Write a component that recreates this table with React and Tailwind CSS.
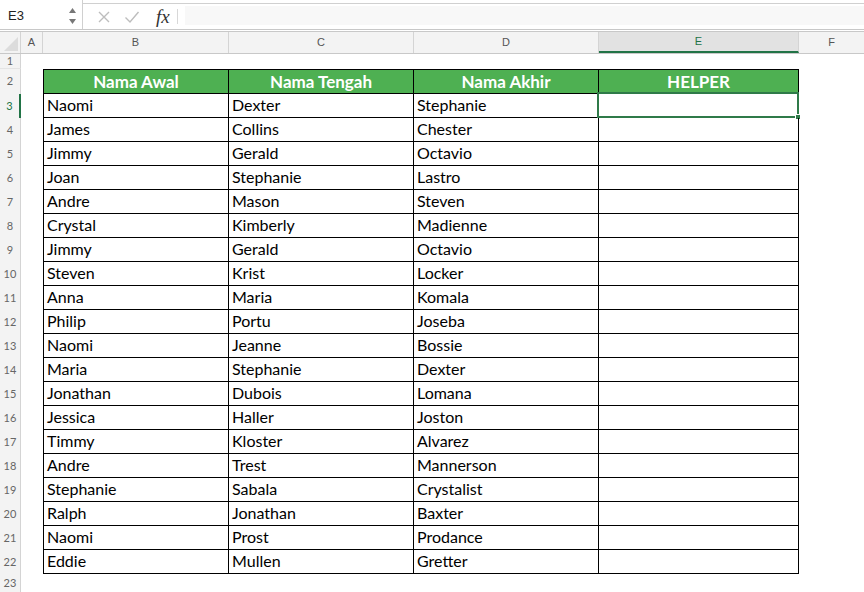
const data = [
  ["Naomi", "Dexter", "Stephanie"],
  ["James", "Collins", "Chester"],
  ["Jimmy", "Gerald", "Octavio"],
  ["Joan", "Stephanie", "Lastro"],
  ["Andre", "Mason", "Steven"],
  ["Crystal", "Kimberly", "Madienne"],
  ["Jimmy", "Gerald", "Octavio"],
  ["Steven", "Krist", "Locker"],
  ["Anna", "Maria", "Komala"],
  ["Philip", "Portu", "Joseba"],
  ["Naomi", "Jeanne", "Bossie"],
  ["Maria", "Stephanie", "Dexter"],
  ["Jonathan", "Dubois", "Lomana"],
  ["Jessica", "Haller", "Joston"],
  ["Timmy", "Kloster", "Alvarez"],
  ["Andre", "Trest", "Mannerson"],
  ["Stephanie", "Sabala", "Crystalist"],
  ["Ralph", "Jonathan", "Baxter"],
  ["Naomi", "Prost", "Prodance"],
  ["Eddie", "Mullen", "Gretter"],
];

const RowHead = ({ n, active = false, className = "" }) => (
  <div
    className={`w-[21px] shrink-0 flex items-center justify-center text-[11px] bg-[#f3f3f3] ${
      active
        ? "text-[#217346] border-r-2 border-[#217346]"
        : "text-[#666] border-r border-[#d4d4d4]"
    } ${className}`}
  >
    {n}
  </div>
);

const FormulaBar = () => (
  <div className="h-[30px] flex border-b border-[#c8c8c8] bg-white">
    <div className="w-[83px] shrink-0 flex items-center justify-between pl-[8px] pr-[5px] border-r border-[#d0d0d0]">
      <span className="text-[13px] text-[#222] mt-[3px]">E3</span>
      <svg width="9" height="18" viewBox="0 0 9 18" className="mt-[3px]">
        <polygon points="4.5,1 8,6 1,6" fill="#777" />
        <polygon points="1,12 8,12 4.5,17" fill="#777" />
      </svg>
    </div>
    <div className="flex-1 flex items-center border-t border-[#d0d0d0] mt-[3px]">
      <div className="w-[94px] shrink-0 flex items-center">
        <svg width="14" height="14" viewBox="0 0 14 14" className="ml-[14px]">
          <path d="M2 2 L12 12 M12 2 L2 12" stroke="#bdbdbd" strokeWidth="1.4" />
        </svg>
        <svg width="16" height="14" viewBox="0 0 16 14" className="ml-[13px]">
          <path d="M1.5 7.5 L6 12 L14.5 2" stroke="#bdbdbd" strokeWidth="1.4" fill="none" />
        </svg>
        <span
          className="ml-[16px] text-[19px] italic text-[#333] leading-none"
          style={{ fontFamily: '"Liberation Serif", serif' }}
        >
          fx
        </span>
      </div>
      <div className="w-px h-[15px] bg-[#d8d8d8]" />
      <div className="flex-1 ml-[7px] h-[19px] mb-[2px] bg-[#f8f8f8]" />
    </div>
  </div>
);

const ColHeader = () => {
  const cols = [
    { l: "A", w: "w-[22px]" },
    { l: "B", w: "w-[186px]" },
    { l: "C", w: "w-[185px]" },
    { l: "D", w: "w-[185px]" },
  ];
  return (
    <div className="h-[23px] mt-[1px] flex border-t border-b border-[#c8c8c8] bg-[#f3f3f3] text-[11px] text-[#555]">
      <div className="w-[21px] shrink-0 border-r border-[#d4d4d4] relative">
        <svg width="14" height="14" viewBox="0 0 14 14" className="absolute right-[2px] bottom-[2px]">
          <polygon points="14,0 14,14 0,14" fill="#dcdcdc" />
        </svg>
      </div>
      {cols.map((c) => (
        <div
          key={c.l}
          className={`${c.w} shrink-0 flex items-center justify-center border-r border-[#d4d4d4]`}
        >
          {c.l}
        </div>
      ))}
      <div className="w-[200px] shrink-0 flex items-center justify-center bg-[#e2e2e2] text-[#217346] border-b-2 border-[#217346] border-r border-r-[#d4d4d4]">
        E
      </div>
      <div className="flex-1 flex items-center justify-center">
        <span className="w-[65px] text-center">F</span>
      </div>
    </div>
  );
};

const Cell = ({ w, children, header = false, first = false, className = "" }) => (
  <div
    className={`${w} shrink-0 relative border-r border-b border-black ${first ? "border-l" : ""} ${
      header
        ? "bg-[#4eb052] text-white text-[17px] font-bold text-center flex items-center justify-center"
        : "flex items-end pl-[3px]"
    } ${className}`}
  >
    {children}
  </div>
);

export default function App() {
  return (
    <div
      className="w-[864px] h-[592px] overflow-hidden bg-white"
      style={{ fontFamily: '"Liberation Sans", Arial, sans-serif' }}
    >
      <FormulaBar />
      <ColHeader />

      <div style={{ fontFamily: 'Lato, "Open Sans", sans-serif' }} className="text-[16px] text-black">
        {/* row 1 */}
        <div className="h-[15px] flex">
          <RowHead n={1} className="border-b border-b-[#e4e4e4]" />
        </div>

        {/* row 2: header */}
        <div className="h-[25px] flex">
          <RowHead n={2} />
          <div className="w-[22px] shrink-0" />
          <Cell w="w-[186px]" header first className="border-t">Nama Awal</Cell>
          <Cell w="w-[185px]" header className="border-t">Nama Tengah</Cell>
          <Cell w="w-[185px]" header className="border-t">Nama Akhir</Cell>
          <Cell w="w-[200px]" header className="border-t">HELPER</Cell>
        </div>

        {data.map((r, i) => (
          <div key={i} className="h-[24px] flex">
            <RowHead n={i + 3} active={i === 0} />
            <div className="w-[22px] shrink-0" />
            <Cell w="w-[186px]" first>{r[0]}</Cell>
            <Cell w="w-[185px]">{r[1]}</Cell>
            <Cell w="w-[185px]">{r[2]}</Cell>
            <Cell w="w-[200px]">
              {i === 0 && (
                <div className="absolute -top-[2px] -left-[2px] -right-[1px] -bottom-[1px] border-2 border-[#2f7a49]">
                  <div className="absolute -right-[4px] -bottom-[4px] w-[6px] h-[6px] bg-[#2f7a49] border border-white" />
                </div>
              )}
            </Cell>
          </div>
        ))}

        <div className="h-[18px] flex">
          <RowHead n={23} />
        </div>
      </div>
    </div>
  );
}
